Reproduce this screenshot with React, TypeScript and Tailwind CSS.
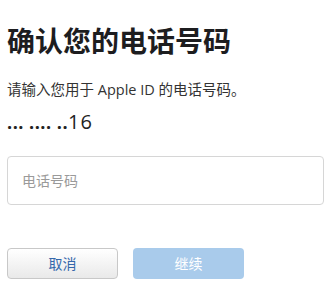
export default function App() {
  const cjk = { fontFamily: '"Open Sans", "Noto Sans CJK SC", sans-serif' };
  return (
    <div className="w-[332px] h-[285px] bg-white overflow-hidden px-[7px]" style={cjk}>
      <h1
        className="pt-[20px] text-[28px] leading-[40px] font-bold text-[#1d1d1f]"
        style={{ fontFamily: '"Noto Sans CJK SC", sans-serif' }}
      >
        确认您的电话号码
      </h1>
      <p className="mt-[20px] text-[14.5px] leading-[20px] text-[#333]">请输入您用于 Apple ID 的电话号码。</p>
      <p className="mt-[12px] leading-[20px] text-[#222] flex items-baseline">
        <span className="text-[18px] font-bold tracking-[0.5px]">... .... ..</span>
        <span className="text-[20px] font-medium tracking-[1px]">16</span>
      </p>
      <div className="mt-[24px] w-[317px] h-[49px] border border-[#d6d6d6] rounded-[4px] flex items-center px-[14px]">
        <span className="text-[14px] text-[#9a9a9a]">电话号码</span>
      </div>
      <div className="mt-[43px] flex gap-[15px]">
        <button className="w-[111px] h-[31px] rounded-[4px] border border-[#c8c8c8] bg-gradient-to-b from-white to-[#e9e9e9] text-[14px] text-[#3568ab]">
          取消
        </button>
        <button className="w-[111px] h-[31px] rounded-[4px] bg-[#a9cbeb] text-[14px] text-white">
          继续
        </button>
      </div>
    </div>
  );
}
